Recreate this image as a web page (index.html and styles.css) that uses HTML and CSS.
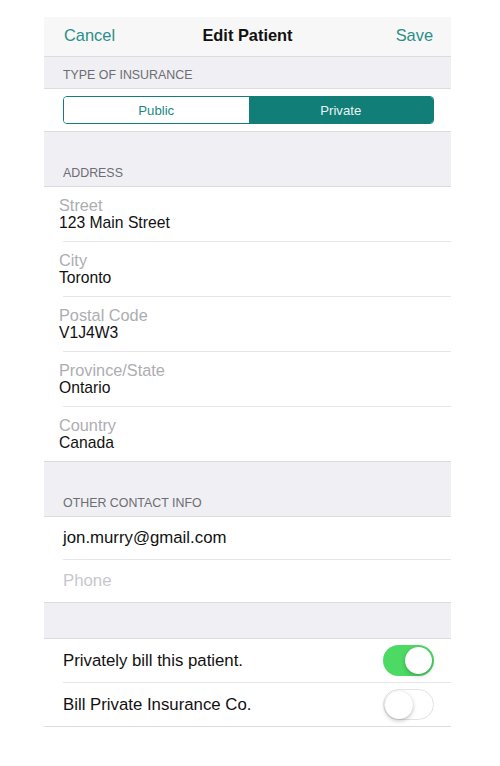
FILE: index.html
```html
<!DOCTYPE html>
<html>
<head>
<meta charset="utf-8">
<link rel="stylesheet" href="styles.css">
</head>
<body>
<div class="screen">
  <div class="nav">
    <span class="nav-btn left">Cancel</span>
    <span class="nav-title">Edit Patient</span>
    <span class="nav-btn right">Save</span>
  </div>

  <div class="group-header short">TYPE OF INSURANCE</div>
  <div class="section">
    <div class="seg-row">
      <div class="segmented">
        <div class="seg">Public</div>
        <div class="seg active">Private</div>
      </div>
    </div>
  </div>

  <div class="group-header tall">ADDRESS</div>
  <div class="section">
    <div class="field"><div class="label">Street</div><div class="value">123 Main Street</div></div>
    <div class="sep"></div>
    <div class="field"><div class="label">City</div><div class="value">Toronto</div></div>
    <div class="sep"></div>
    <div class="field"><div class="label">Postal Code</div><div class="value">V1J4W3</div></div>
    <div class="sep"></div>
    <div class="field"><div class="label">Province/State</div><div class="value">Ontario</div></div>
    <div class="sep"></div>
    <div class="field last"><div class="label">Country</div><div class="value">Canada</div></div>
  </div>

  <div class="group-header tall2">OTHER CONTACT INFO</div>
  <div class="section">
    <div class="cell">jon.murry@gmail.com</div>
    <div class="sep"></div>
    <div class="cell placeholder">Phone</div>
  </div>

  <div class="group-header spacer"></div>
  <div class="section">
    <div class="cell toggle-cell">
      <span>Privately bill this patient.</span>
      <span class="switch on"><span class="knob"></span></span>
    </div>
    <div class="sep"></div>
    <div class="cell toggle-cell">
      <span>Bill Private Insurance Co.</span>
      <span class="switch off"><span class="knob"></span></span>
    </div>
  </div>
</div>
</body>
</html>
```

FILE: styles.css
```css
html, body {
  margin: 0;
  padding: 0;
  background: #ffffff;
}
body {
  font-family: "Liberation Sans", Arial, sans-serif;
  color: #111111;
}
.screen {
  margin-top: 17px;
  margin-left: 44px;
  width: 407px;
}
.nav {
  height: 38px;
  background: #f7f7f7;
  border-bottom: 1px solid #dcdce0;
  display: grid;
  grid-template-columns: 1fr auto 1fr;
  align-items: center;
  font-size: 16.4px;
  padding-bottom: 1px;
  box-sizing: content-box;
}
.nav > span {
  margin-top: -2px;
}
.nav-btn {
  color: #2a8f8a;
}
.nav-btn.left {
  padding-left: 20px;
}
.nav-btn.right {
  justify-self: end;
  padding-right: 18px;
}
.nav-title {
  font-weight: bold;
  color: #111111;
}
.group-header {
  background: #efeff4;
  display: flex;
  align-items: flex-end;
  box-sizing: border-box;
  padding-left: 19px;
  padding-bottom: 5px;
  font-size: 12.4px;
  line-height: 15px;
  color: #6d6d72;
}
.group-header.short { height: 31px; }
.group-header.tall { height: 54px; }
.group-header.tall2 { height: 54px; }
.group-header.spacer { height: 35px; padding: 0; }
.section {
  background: #ffffff;
  border-top: 1px solid #dcdce0;
  border-bottom: 1px solid #dcdce0;
}
.seg-row {
  height: 42px;
  display: flex;
  align-items: center;
  padding-left: 19px;
  padding-right: 17px;
}
.segmented {
  flex: 1;
  height: 28px;
  box-sizing: border-box;
  border: 1px solid #127e78;
  border-radius: 4px;
  display: flex;
  overflow: hidden;
}
.seg {
  flex: 1;
  display: flex;
  align-items: center;
  justify-content: center;
  font-size: 13.2px;
  color: #1c8781;
  background: #ffffff;
}
.seg.active {
  background: #127e78;
  color: #e8f4f3;
}
.sep {
  height: 1px;
  background: #e6e6e9;
  margin-left: 19px;
}
.field {
  height: 54px;
  box-sizing: border-box;
  padding-left: 15px;
  padding-top: 10px;
}
.label {
  font-size: 16.3px;
  line-height: 17px;
  color: #adadb2;
}
.value {
  font-size: 15.7px;
  line-height: 17px;
  color: #111111;
}
.cell {
  height: 42px;
  display: flex;
  align-items: center;
  padding-left: 19px;
  font-size: 16.8px;
  color: #111111;
}
.cell.placeholder {
  color: #c7c7cd;
}
.toggle-cell {
  justify-content: space-between;
  padding-right: 17px;
  height: 43px;
}
.switch {
  width: 51px;
  height: 31px;
  box-sizing: border-box;
  border-radius: 16px;
  display: flex;
  align-items: center;
}
.switch.on {
  background: #4cd964;
  justify-content: flex-end;
  padding-right: 2px;
}
.switch.off {
  background: #ffffff;
  border: 1.5px solid #e3e3e7;
  justify-content: flex-start;
  padding-left: 0.5px;
}
.knob {
  width: 27px;
  height: 27px;
  border-radius: 50%;
  background: #ffffff;
  box-shadow: 0 2px 4px rgba(0, 0, 0, 0.22), 0 0 1px rgba(0, 0, 0, 0.15);
}
.switch.off .knob {
  width: 28px;
  height: 28px;
}
```
